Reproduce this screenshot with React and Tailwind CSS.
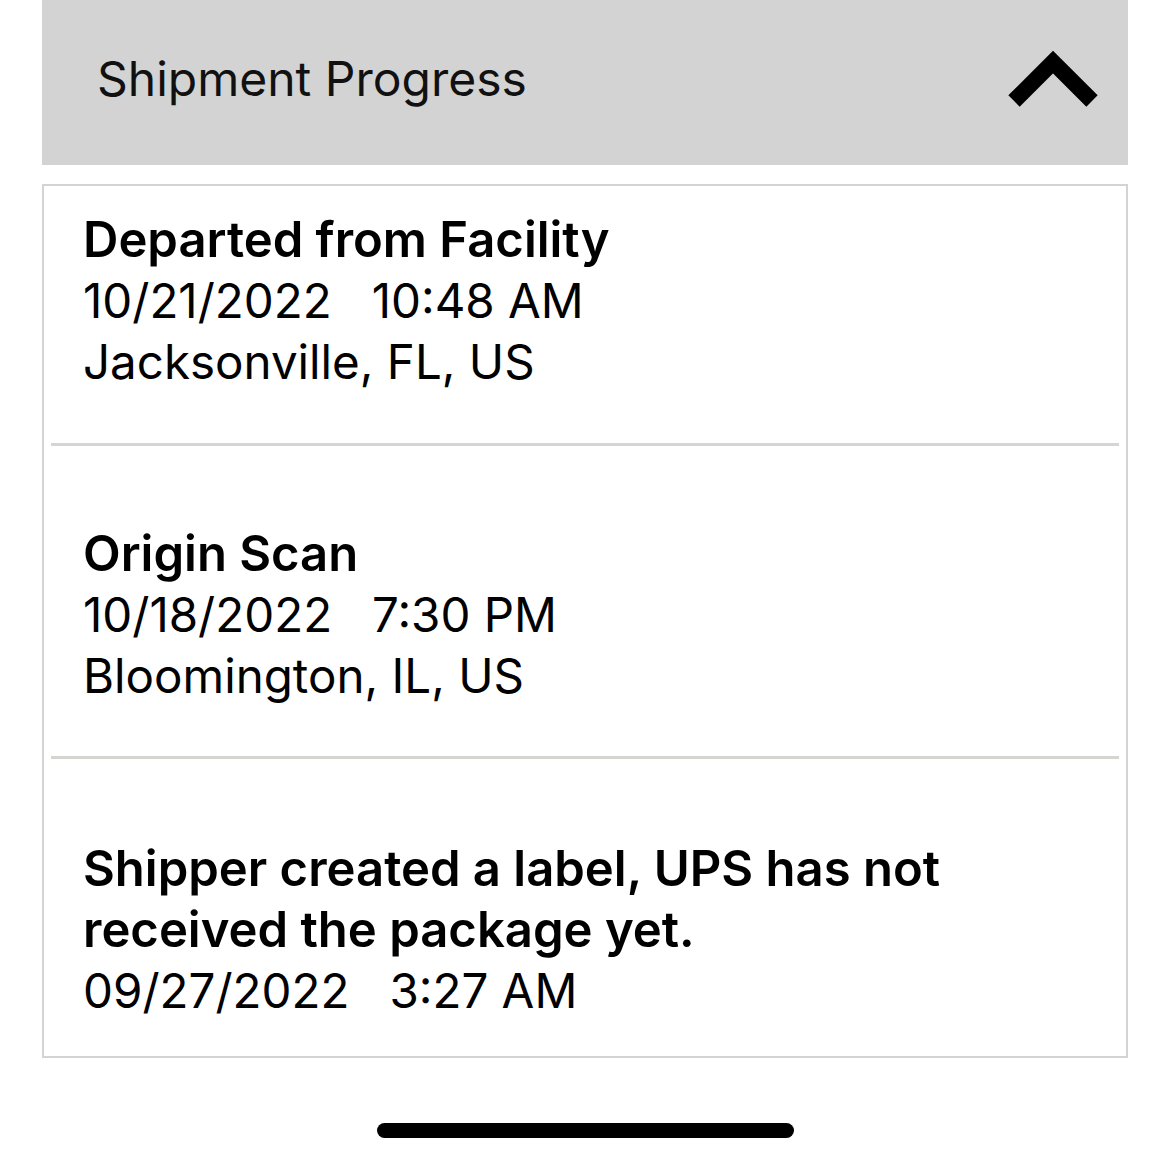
// 배송 진행 상황 — 접이식 헤더 + 이벤트 카드 목록
const EVENTS = [
  { id: 1, title: 'Departed from Facility', date: '10/21/2022', time: '10:48 AM', place: 'Jacksonville, FL, US', pad: 'pt-[23px] pb-[51px]' },
  { id: 2, title: 'Origin Scan', date: '10/18/2022', time: '7:30 PM', place: 'Bloomington, IL, US', pad: 'pt-[77px] pb-[50px]' },
  { id: 3, title: 'Shipper created a label, UPS has not received the package yet.', date: '09/27/2022', time: '3:27 AM', pad: 'pt-[79px] pb-[35px]' },
]

export default function App() {
  return (
    <div className="flex min-h-[1162px] w-[1170px] flex-col bg-white font-['Inter','Noto_Sans',sans-serif] text-black">
      <div className="mx-[42px] flex h-[165px] items-center justify-between bg-[#d3d3d3] pl-[55px] pr-[20px]">
        <h1 className="pb-[8px] text-[48px] leading-none font-normal text-[#111]">Shipment Progress</h1>
        <Chevron />
      </div>

      <div className="mx-[42px] mt-[19px] border-2 border-[#d4d4d4]">
        {EVENTS.map((ev, i) => (
          <div key={ev.id}>
            {i > 0 && <div className="mx-[7px] h-[3px] bg-[#d7d5d1]" />}
            <div className={`px-[39px] text-[47.5px] leading-[61px] ${ev.pad}`}>
              <p className="max-w-[940px] text-[49px] font-semibold">{ev.title}</p>
              <p>
                {ev.date}
                <span className="inline-block w-[40px]" />
                {ev.time}
              </p>
              {ev.place && <p>{ev.place}</p>}
            </div>
          </div>
        ))}
      </div>

      {/* 홈 인디케이터 */}
      <div className="mt-[65px] flex justify-center pl-[1px]">
        <div className="h-[15px] w-[417px] rounded-full bg-black" />
      </div>
    </div>
  )
}

function Chevron() {
  return (
    <svg width="100" height="70" viewBox="0 0 100 70" className="mt-[-2px]">
      <polyline points="6,54 45,15 84,54" fill="none" stroke="#000" strokeWidth="16" strokeLinejoin="miter" />
    </svg>
  )
}
